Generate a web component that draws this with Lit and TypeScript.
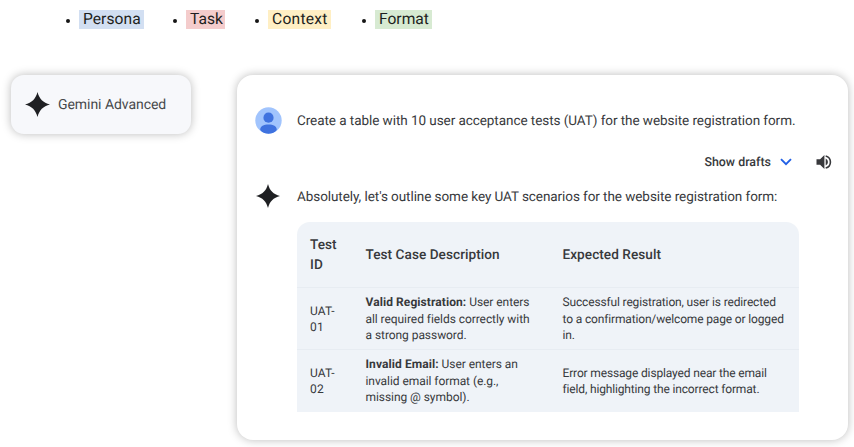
import { LitElement, html, css, svg } from "lit";
import { customElement } from "lit/decorators.js";

const spark = html`<svg class="spark" viewBox="0 0 24 24">
  ${svg`<path d="M12 0C13.7 6.6 17.4 10.3 24 12C17.4 13.7 13.7 17.4 12 24C10.3 17.4 6.6 13.7 0 12C6.6 10.3 10.3 6.6 12 0Z" fill="#1f2023"/>`}
</svg>`;

@customElement("prompt-legend")
export class PromptLegend extends LitElement {
  static styles = css`
    ul { list-style: none; display: flex; margin: 0; padding: 10px 0 0 66px; height: 19px; color: #1d1e20; font: 15.6px/19px Roboto, sans-serif; }
    li { display: flex; align-items: center; }
    li::before { content: ""; width: 4px; height: 4px; border-radius: 50%; background: #151515; margin: 3px 9px 0 0; }
    span { display: block; box-sizing: border-box; height: 19px; padding-left: 4px; white-space: nowrap; }
    .persona { width: 65px; background: #d2dff2; margin-right: 29px; letter-spacing: .05px; }
    .task { width: 39px; background: #f4cccc; margin-right: 30px; }
    .context { width: 63px; background: #ffefc4; margin-right: 31px; letter-spacing: .25px; }
    .format { width: 57px; background: #d7ead2; }
  `;
  render() {
    return html`<ul>
      <li><span class="persona">Persona</span></li>
      <li><span class="task">Task</span></li>
      <li><span class="context">Context</span></li>
      <li><span class="format">Format</span></li>
    </ul>`;
  }
}

@customElement("chat-card")
export class ChatCard extends LitElement {
  static styles = css`
    :host { display: block; box-sizing: border-box; width: 611px; height: 365px; border-radius: 16px; background: #fff; box-shadow: 0 0 10px rgba(0,0,0,.27); padding: 32px 16px 0 18px; font-family: Roboto, sans-serif; color: #37393c; }
    .row { display: flex; align-items: center; height: 27px; font-size: 13.5px; white-space: nowrap; }
    .avatar { width: 27px; height: 27px; margin-right: 15px; }
    .tools { display: flex; align-items: center; justify-content: flex-end; height: 20px; margin-top: 18px; font-weight: 500; font-size: 12.4px; letter-spacing: .02px; }
    .tools span { padding-top: 1px; }
    .chevron { width: 12px; height: 8px; margin: 0 24px 0 9px; }
    .speaker { width: 16px; height: 16px; }
    .answer { margin-top: 12px; height: 24px; }
    .answer .a { margin-top: 2px; }
    .spark { width: 24px; height: 24px; margin: -1px 17px 0 1px; }
    .q { letter-spacing: -.06px; margin-top: 1px; }
    .a { letter-spacing: -.07px; }
    .table { display: grid; grid-template-columns: 55.5px 197px 1fr; grid-template-rows: 66px 62px 62px; margin: 14px 0 0 42px; width: 502px; box-sizing: border-box; padding-left: 13px; border-radius: 13px 13px 0 0; background: linear-gradient(#e7ecf2, #e7ecf2) 0 65px / 100% 1px no-repeat, linear-gradient(#e7ecf2, #e7ecf2) 0 127px / 100% 1px no-repeat, #eff3f8; }
    .cell { display: flex; flex-direction: column; justify-content: center; align-items: flex-start; font-size: 12px; line-height: 16.5px; white-space: nowrap; letter-spacing: .2px; }
    .desc { letter-spacing: -.06px; }
    .result { letter-spacing: -.15px; }
    .head { font-size: 13.6px; line-height: 20px; font-weight: 500; letter-spacing: .05px; }
    b { font-weight: 700; letter-spacing: .08px; }
  `;
  render() {
    return html`
      <div class="row">
        <svg class="avatar" viewBox="0 0 27 27"><defs><clipPath id="face"><circle cx="13.5" cy="13.5" r="13.2"/></clipPath></defs><g clip-path="url(#face)"><rect width="27" height="27" fill="#a1c4fd"/><circle cx="13.5" cy="10.7" r="5.1" fill="#3f72df"/><path d="M5.2 23c0-3.9 3.500-5.400 8.300-5.400s8.300 1.500 8.300 5.400c-2 2.700-5 4-8.300 4s-6.300-1.300-8.300-4Z" fill="#3f72df"/></g></svg>
        <span class="q">Create a table with 10 user acceptance tests (UAT) for the website registration form.</span>
      </div>
      <div class="tools"><span>Show drafts</span>
        <svg class="chevron" viewBox="0 0 12 8"><path d="M1 1.2 6 6.2 11 1.2" fill="none" stroke="#2160e5" stroke-width="1.9"/></svg>
        <svg class="speaker" viewBox="0 0 16 16"><path d="M.5 5.300v5.400h3.600l4.300 4.300V1L4.100 5.300ZM9.700 4.400v7.200a4 4 0 0 0 0-7.200Z" fill="#38393c"/><path d="M9.700 1.900a6.300 6.300 0 0 1 0 12.200" fill="none" stroke="#38393c" stroke-width="1.600"/></svg>
      </div>
      <div class="row answer">${spark}<span class="a">Absolutely, let's outline some key UAT scenarios for the website registration form:</span></div>
      <div class="table">
        <div class="cell head"><span>Test</span><span>ID</span></div>
        <div class="cell head"><span>Test Case Description</span></div>
        <div class="cell head"><span>Expected Result</span></div>
        <div class="cell"><span>UAT-</span><span>01</span></div>
        <div class="cell desc"><span><b>Valid Registration:</b> User enters</span><span>all required fields correctly with</span><span>a strong password.</span></div>
        <div class="cell result"><span>Successful registration, user is redirected</span><span>to a confirmation/welcome page or logged</span><span>in.</span></div>
        <div class="cell"><span>UAT-</span><span>02</span></div>
        <div class="cell desc"><span><b>Invalid Email:</b> User enters an</span><span>invalid email format (e.g.,</span><span>missing @ symbol).</span></div>
        <div class="cell result"><span>Error message displayed near the email</span><span>field, highlighting the incorrect format.</span></div>
      </div>`;
  }
}

@customElement("app-root")
export class AppRoot extends LitElement {
  static styles = css`
    :host { display: block; width: 854px; height: 447px; overflow: hidden; background: #fff; text-rendering: geometricPrecision; }
    .main { display: flex; align-items: flex-start; gap: 46px; padding: 46px 0 0 11px; }
    .model { display: flex; align-items: center; box-sizing: border-box; width: 180px; height: 59px; padding-left: 14px; border-radius: 13px; background: #f7f8fb; box-shadow: 0 0 10px rgba(0,0,0,.27); font: 14px Roboto, sans-serif; color: #47494c; letter-spacing: -.05px; white-space: nowrap; }
    .spark { width: 25px; height: 25px; margin-right: 8px; }
  `;
  render() {
    return html`<prompt-legend></prompt-legend>
      <div class="main"><div class="model">${spark}<span>Gemini Advanced</span></div><chat-card></chat-card></div>`;
  }
}
